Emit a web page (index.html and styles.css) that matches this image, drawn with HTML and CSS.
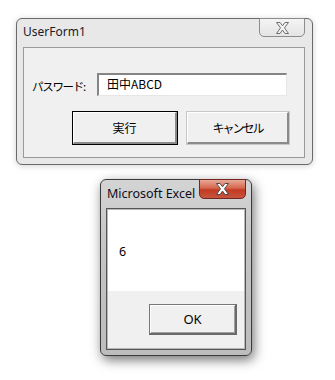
FILE: index.html
```html
<!DOCTYPE html>
<html lang="ja">
<head>
<meta charset="utf-8">
<link rel="stylesheet" href="styles.css">
</head>
<body>
<div class="win win-form">
  <div class="titlebar"><span class="title">UserForm1</span></div>
  <div class="close close-inactive">
    <svg width="15" height="12" viewBox="0 0 15 12"><path d="M1.5,0.5 H5 L7.5,3.8 L10,0.5 H13.5 L9.5,5.8 L13.5,11.5 H10 L7.5,8 L5,11.5 H1.5 L5.5,5.8 Z" fill="#f2f2f2" stroke="#6e6e6e" stroke-width="1"/></svg>
  </div>
  <div class="client form-client">
    <div class="row">
      <span class="label">パスワード:</span>
      <div class="textbox">田中ABCD</div>
    </div>
    <div class="row buttons">
      <div class="btn btn-default">実行</div>
      <div class="btn btn-narrow">キャンセル</div>
    </div>
  </div>
</div>

<div class="win win-msg">
  <div class="titlebar"><span class="title">Microsoft Excel</span></div>
  <div class="close close-active">
    <svg width="15" height="12" viewBox="0 0 15 12"><path d="M1.5,0.5 H5 L7.5,3.8 L10,0.5 H13.5 L9.5,5.8 L13.5,11.5 H10 L7.5,8 L5,11.5 H1.5 L5.5,5.8 Z" fill="#ffffff" stroke="#4a4a4a" stroke-width="1"/></svg>
  </div>
  <div class="client msg-client">
    <div class="msg-body"><span class="msg-text">6</span></div>
    <div class="msg-foot">
      <div class="btn btn-ok">OK</div>
    </div>
  </div>
</div>
</body>
</html>
```
FILE: styles.css
```css
html, body {
  margin: 0;
  padding: 0;
  background: #ffffff;
  width: 335px;
  height: 380px;
  overflow: hidden;
  font-family: "Noto Sans", "Open Sans", sans-serif;
}

.win {
  position: absolute;
  box-sizing: border-box;
  border-radius: 6px;
  display: flex;
  flex-direction: column;
}

.win-form {
  left: 16px;
  top: 18px;
  width: 297px;
  height: 147px;
  border: 1px solid #6a6a6a;
  background: #e8e8e8;
  padding: 0 7px 6px 6px;
  box-shadow: 0 1px 6px rgba(0, 0, 0, 0.18);
}

.win-msg {
  left: 100px;
  top: 179px;
  width: 152px;
  height: 177px;
  border: 1px solid #3a3a3a;
  background: linear-gradient(#d4d4d4, #c4c4c4 40%, #bdbdbd);
  padding: 0 5px 5px 5px;
  box-shadow: 2px 4px 12px rgba(0, 0, 0, 0.55);
}

.titlebar {
  height: 28px;
  display: flex;
  align-items: center;
  flex: none;
}

.title {
  font-size: 12px;
  color: #1a1a2a;
  padding-bottom: 3px;
}

.win-msg .titlebar {
  height: 28px;
  padding-left: 1px;
}

.win-msg .title {
  font-size: 12.5px;
  color: #0c0c20;
  padding-bottom: 1px;
}

.close {
  position: absolute;
  top: -1px;
  height: 19px;
  width: 46px;
  box-sizing: border-box;
  border-radius: 0 0 5px 5px;
  display: flex;
  align-items: center;
  justify-content: center;
}

.close-inactive {
  right: 7px;
  border: 1px solid #8c8c8c;
  background: linear-gradient(#f4f4f4, #e4e4e4);
}

.close-active {
  right: 5px;
  width: 47px;
  height: 20px;
  border: 1px solid #6e2a20;
  background: linear-gradient(#e8a898 0%, #d6664e 45%, #c23a22 55%, #c8543e 100%);
}

.client {
  flex: 1;
  box-sizing: border-box;
  background: #f0f0f0;
}

.form-client {
  border: 1px solid #9a9a9a;
  padding: 25px 0 0 8px;
  display: flex;
  flex-direction: column;
}

.row {
  display: flex;
  align-items: center;
}

.label {
  width: 65px;
  font-family: "Noto Sans CJK JP", sans-serif;
  font-size: 11.5px;
  letter-spacing: -1.3px;
  color: #000;
  padding-top: 3px;
}

.textbox {
  width: 190px;
  height: 23px;
  box-sizing: border-box;
  background: #fff;
  border-top: 2px solid #858585;
  border-left: 2px solid #858585;
  border-bottom: 1px solid #e6e6e6;
  border-right: 1px solid #e6e6e6;
  font-family: "Noto Sans CJK JP", sans-serif;
  font-size: 12px;
  line-height: 17px;
  padding-left: 8px;
  color: #000;
}

.buttons {
  margin-top: 16px;
  padding-left: 40px;
  gap: 8px;
}

.btn {
  width: 104px;
  height: 32px;
  box-sizing: border-box;
  background: #f0f0f0;
  border-top: 1px solid #ffffff;
  border-left: 1px solid #ffffff;
  border-right: 2px solid #8a8a8a;
  border-bottom: 2px solid #8a8a8a;
  display: flex;
  align-items: center;
  justify-content: center;
  font-family: "Noto Sans CJK JP", sans-serif;
  font-size: 12px;
  color: #000;
  outline: 1px solid #c8c8c8;
}

.btn-default {
  outline: 1px solid #000;
  margin-left: 1px;
}

.btn-narrow {
  margin-left: 2px;
  width: 102px;
  letter-spacing: -2px;
}

.msg-client {
  border: 1px solid #555;
  box-shadow: inset 0 0 0 1px #b8b8b8;
  display: flex;
  flex-direction: column;
  padding: 1px;
}

.msg-body {
  height: 81px;
  background: #fff;
  display: flex;
  align-items: center;
  padding-left: 11px;
  flex: none;
}

.msg-text {
  font-size: 12.5px;
  color: #000;
  padding-top: 1px;
}

.msg-foot {
  flex: 1;
  background: #f0f0f0;
  display: flex;
  justify-content: flex-end;
  align-items: flex-start;
  padding: 13px 7px 0 0;
}

.btn-ok {
  width: 88px;
  height: 31px;
  outline: none;
  border-top: 1px solid #777;
  border-left: 1px solid #777;
  border-right: 2px solid #6a6a6a;
  border-bottom: 2px solid #6a6a6a;
  box-shadow: inset 1px 1px 0 #fff, inset -1px -1px 0 #a0a0a0;
  font-family: "Noto Sans", sans-serif;
  font-size: 13px;
}
```
